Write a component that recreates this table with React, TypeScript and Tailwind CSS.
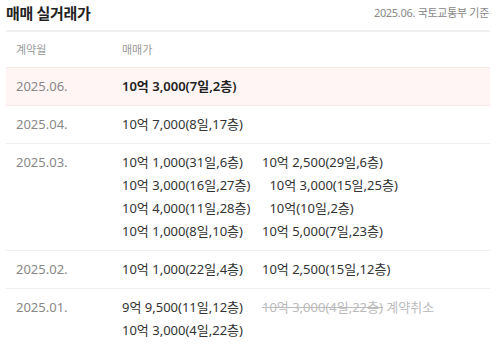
import React from "react";

type Deal = { price: string; canceled?: boolean };
type Row = { month: string; deals: Deal[]; highlight?: boolean };

const ROWS: Row[] = [
  { month: "2025.06.", deals: [{ price: "10억 3,000(7일,2층)" }], highlight: true },
  { month: "2025.04.", deals: [{ price: "10억 7,000(8일,17층)" }] },
  {
    month: "2025.03.",
    deals: [
      { price: "10억 1,000(31일,6층)" },
      { price: "10억 2,500(29일,6층)" },
      { price: "10억 3,000(16일,27층)" },
      { price: "10억 3,000(15일,25층)" },
      { price: "10억 4,000(11일,28층)" },
      { price: "10억(10일,2층)" },
      { price: "10억 1,000(8일,10층)" },
      { price: "10억 5,000(7일,23층)" },
    ],
  },
  {
    month: "2025.02.",
    deals: [{ price: "10억 1,000(22일,4층)" }, { price: "10억 2,500(15일,12층)" }],
  },
  {
    month: "2025.01.",
    deals: [
      { price: "9억 9,500(11일,12층)" },
      { price: "10억 3,000(4일,22층)", canceled: true },
      { price: "10억 3,000(4일,22층)" },
    ],
  },
];

export default function App() {
  return (
    <div className="w-[501px] h-[348px] overflow-hidden bg-white px-[6px] font-['Noto_Sans','Noto_Sans_CJK_KR',sans-serif]">
      {/* Title */}
      <div className="flex items-center justify-between h-[30px] pb-[4px]">
        <h2 className="text-[15px] font-bold text-[#222] tracking-[-0.3px]">매매 실거래가</h2>
        <span className="text-[11px] text-[#888] tracking-[-0.3px] pr-[6px]">2025.06. 국토교통부 기준</span>
      </div>

      <table className="w-[484px] border-collapse border-t-2 border-[#f0f0f0] text-[13px]">
        <thead>
          <tr className="h-[36px] text-left">
            <th className="w-[106px] pl-[10px] pt-[2px] text-[11px] font-normal text-[#999]">계약월</th>
            <th className="pl-[10px] pt-[2px] text-[11px] font-normal text-[#999]">매매가</th>
          </tr>
        </thead>
        <tbody>
          {ROWS.map((row) => (
            <tr
              key={row.month}
              className={
                row.highlight
                  ? "bg-[#fff5f5] border-y border-[#fde6e6]"
                  : "border-b border-[#efefef]"
              }
            >
              <td className="align-top pl-[10px] py-[7px] leading-[23px] text-[#888]">
                {row.month}
              </td>
              <td className="align-top pl-[10px] py-[7px] leading-[23px]">
                {row.deals.map((d, i) =>
                  d.canceled ? (
                    <span key={i} className="inline-block mr-[19px] text-[#bbb]">
                      <span className="line-through">{d.price}</span> 계약취소
                    </span>
                  ) : (
                    <span
                      key={i}
                      className={`inline-block mr-[19px] ${
                        row.highlight ? "font-semibold text-[#222]" : "text-[#333]"
                      }`}
                    >
                      {d.price}
                    </span>
                  )
                )}
              </td>
            </tr>
          ))}
        </tbody>
      </table>
    </div>
  );
}
